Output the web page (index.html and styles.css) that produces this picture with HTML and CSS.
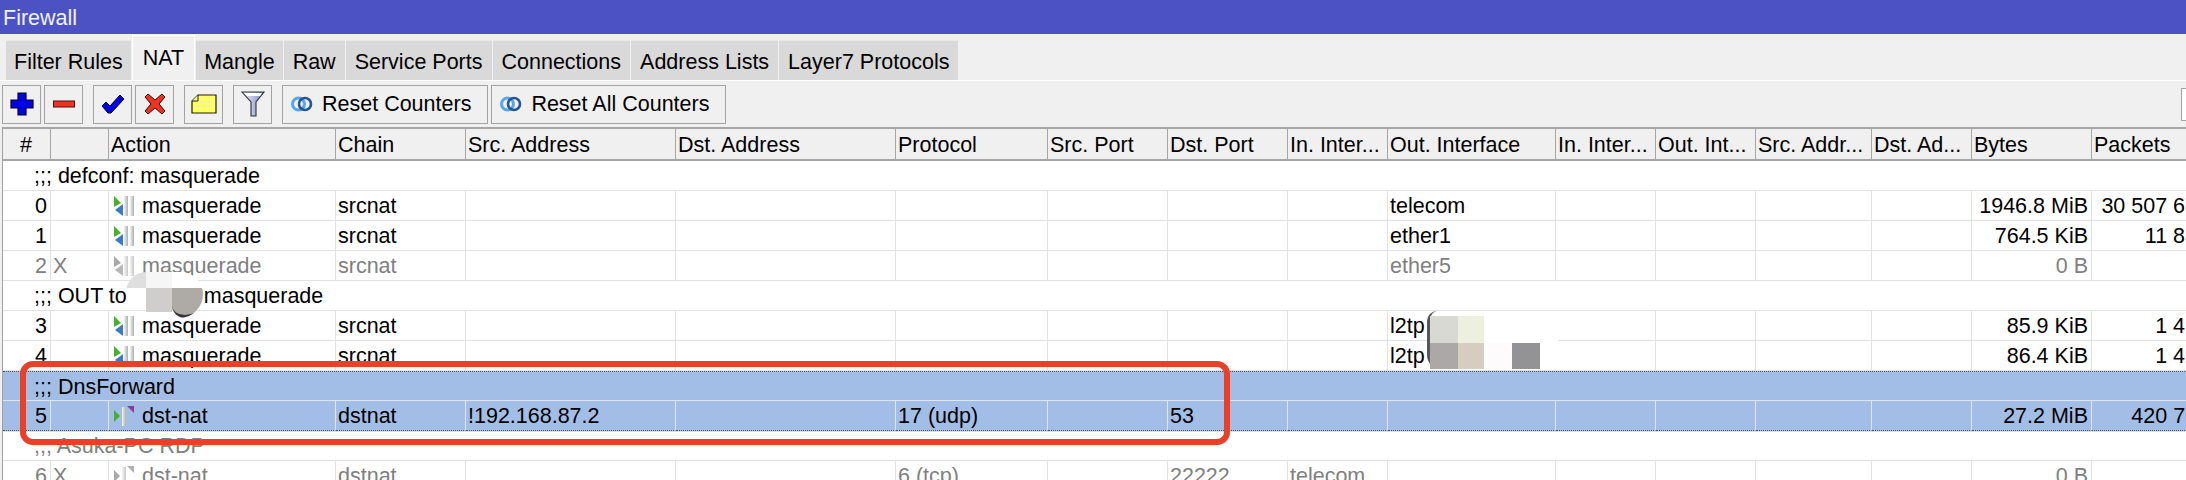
FILE: index.html
```html
<!DOCTYPE html>
<html lang="en">
<head>
    <meta charset="UTF-8">
    <title>Firewall</title>
    <link rel="stylesheet" href="styles.css">
</head>
<body>
    <svg class="defs" width="0" height="0">
        <defs>
            <linearGradient id="barGrad" x1="0" x2="1" y1="0" y2="0">
                <stop offset="0" stop-color="#f2f4f2"/>
                <stop offset="1" stop-color="#a9b1ad"/>
            </linearGradient>
            <linearGradient id="barOff" x1="0" x2="1" y1="0" y2="0">
                <stop offset="0" stop-color="#f4f4f4"/>
                <stop offset="1" stop-color="#c8c8c8"/>
            </linearGradient>
            <linearGradient id="funnelGrad" x1="0" x2="1" y1="0" y2="0">
                <stop offset="0" stop-color="#eef0f8"/>
                <stop offset="1" stop-color="#7f8cc0"/>
            </linearGradient>
            <symbol id="masq" viewBox="0 0 22 20">
                <path d="M1 0 L8 7 L1 11 Z" fill="#46b02e"/>
                <path d="M10 8 V20 L2 14 Z" fill="#3a7cc4"/>
                <rect x="11" y="0" width="4" height="20" fill="url(#barGrad)"/>
                <rect x="17" y="0" width="4" height="20" fill="url(#barGrad)"/>
            </symbol>
            <symbol id="masq-off" viewBox="0 0 22 20">
                <path d="M1 0 L8 7 L1 11 Z" fill="#a8a8a8"/>
                <path d="M10 8 V20 L2 14 Z" fill="#b8b8b8"/>
                <rect x="11" y="0" width="4" height="20" fill="url(#barOff)"/>
                <rect x="17" y="0" width="4" height="20" fill="url(#barOff)"/>
            </symbol>
            <symbol id="dnat" viewBox="0 0 22 20">
                <path d="M1 4 L7 10 L1 16 Z" fill="#46b02e"/>
                <rect x="9" y="1" width="4" height="19" fill="url(#barGrad)"/>
                <path d="M14 0 H21 V7 Z" fill="#8a3f94"/>
            </symbol>
            <symbol id="dnat-off" viewBox="0 0 22 20">
                <path d="M1 4 L7 10 L1 16 Z" fill="#a8a8a8"/>
                <rect x="9" y="1" width="4" height="19" fill="url(#barOff)"/>
                <path d="M14 0 H21 V7 Z" fill="#b0b0b0"/>
            </symbol>
            <symbol id="reset" viewBox="0 0 22 16">
                <circle cx="7.5" cy="8" r="6" fill="none" stroke="#58a6ea" stroke-width="3"/>
                <circle cx="14" cy="8" r="6" fill="none" stroke="#26568c" stroke-width="2.6"/>
            </symbol>
        </defs>
    </svg>

    <div class="titlebar">Firewall</div>

    <div class="tabs">
        <div class="tab tight">Filter Rules</div>
        <div class="tab active">NAT</div>
        <div class="tab tight">Mangle</div>
        <div class="tab">Raw</div>
        <div class="tab">Service Ports</div>
        <div class="tab">Connections</div>
        <div class="tab">Address Lists</div>
        <div class="tab">Layer7 Protocols</div>
    </div>

    <div class="toolbar">
        <button class="tool">
            <svg viewBox="0 0 24 24" width="24" height="24"><path d="M8 1 H16 V8 H23 V16 H16 V23 H8 V16 H1 V8 H8 Z" fill="#0000e6" stroke="#000020" stroke-width="1.2"/></svg>
        </button>
        <button class="tool">
            <svg viewBox="0 0 24 24" width="24" height="24"><rect x="1.5" y="9" width="21" height="6" fill="#ee3322" stroke="#501008" stroke-width="1"/></svg>
        </button>
        <button class="tool gap">
            <svg viewBox="0 0 24 24" width="24" height="24"><path d="M1 14 L5 10 L9 14 L19 3 L23 7 L10 21 H7 Z" fill="#0000e6" stroke="#000020" stroke-width="1"/></svg>
        </button>
        <button class="tool">
            <svg viewBox="0 0 24 24" width="24" height="24"><path d="M5 2 L12 8 L19 2 L22 5 L16 12 L22 19 L19 22 L12 16 L5 22 L2 19 L8 12 L2 5 Z" fill="#ee3322" stroke="#300804" stroke-width="1"/></svg>
        </button>
        <button class="tool gap">
            <svg viewBox="0 0 26 22" width="26" height="22"><path d="M7 2 H25 V20 H1 V8 Z" fill="#ffff66" stroke="#202000" stroke-width="1.2"/><path d="M7 2 V8 H1" fill="#fff9b0" stroke="#202000" stroke-width="1"/><path d="M9 9 H14 M16 9 H21 M5 13 H12 M14 13 H20" stroke="#e8e8d0" stroke-width="1.2"/></svg>
        </button>
        <button class="tool gap">
            <svg viewBox="0 0 24 26" width="24" height="26"><path d="M1 1 H23 L15 11 V25 H10 V11 Z" fill="url(#funnelGrad)" stroke="#303040" stroke-width="1.1"/><path d="M3 2 H21 L19 5 H6 Z" fill="#fff"/></svg>
        </button>
        <button class="tool wide gap">
            <svg width="22" height="16"><use href="#reset"/></svg>
            Reset Counters
        </button>
        <button class="tool wide">
            <svg width="22" height="16"><use href="#reset"/></svg>
            Reset All Counters
        </button>
        <input class="find" type="text">
    </div>

    <table class="rules">
        <colgroup>
            <col class="c-num"><col class="c-flag"><col class="c-action"><col class="c-chain">
            <col class="c-src"><col class="c-dst"><col class="c-proto"><col class="c-port"><col class="c-port">
            <col class="c-in"><col class="c-out"><col class="c-in"><col class="c-in">
            <col class="c-srcl"><col class="c-in"><col class="c-bytes"><col class="c-packets">
        </colgroup>
        <thead>
            <tr>
                <th class="center">#</th><th></th><th>Action</th><th>Chain</th><th>Src. Address</th><th>Dst. Address</th>
                <th>Protocol</th><th>Src. Port</th><th>Dst. Port</th><th>In. Inter...</th><th>Out. Interface</th><th>In. Inter...</th>
                <th>Out. Int...</th><th>Src. Addr...</th><th>Dst. Ad...</th><th>Bytes</th><th>Packets</th>
            </tr>
        </thead>
        <tbody>
            <tr><td class="comment" colspan="17">;;; defconf: masquerade</td></tr>
            <tr>
                <td class="num">0</td><td></td>
                <td><svg class="ico" width="22" height="20"><use href="#masq"/></svg>masquerade</td>
                <td>srcnat</td><td></td><td></td><td></td><td></td><td></td><td></td><td>telecom</td><td></td><td></td><td></td><td></td>
                <td class="num">1946.8 MiB</td><td class="num">30 507 678</td>
            </tr>
            <tr>
                <td class="num">1</td><td></td>
                <td><svg class="ico" width="22" height="20"><use href="#masq"/></svg>masquerade</td>
                <td>srcnat</td><td></td><td></td><td></td><td></td><td></td><td></td><td>ether1</td><td></td><td></td><td></td><td></td>
                <td class="num">764.5 KiB</td><td class="num">11 834</td>
            </tr>
            <tr class="off">
                <td class="num">2</td><td>X</td>
                <td><svg class="ico" width="22" height="20"><use href="#masq-off"/></svg>masquerade</td>
                <td>srcnat</td><td></td><td></td><td></td><td></td><td></td><td></td><td>ether5</td><td></td><td></td><td></td><td></td>
                <td class="num">0 B</td><td class="num"></td>
            </tr>
            <tr><td class="comment" colspan="17">;;; OUT to <span class="redacted"></span>masquerade</td></tr>
            <tr>
                <td class="num">3</td><td></td>
                <td><svg class="ico" width="22" height="20"><use href="#masq"/></svg>masquerade</td>
                <td>srcnat</td><td></td><td></td><td></td><td></td><td></td><td></td><td>l2tp</td><td></td><td></td><td></td><td></td>
                <td class="num">85.9 KiB</td><td class="num">1 412</td>
            </tr>
            <tr>
                <td class="num">4</td><td></td>
                <td><svg class="ico" width="22" height="20"><use href="#masq"/></svg>masquerade</td>
                <td>srcnat</td><td></td><td></td><td></td><td></td><td></td><td></td><td>l2tp</td><td></td><td></td><td></td><td></td>
                <td class="num">86.4 KiB</td><td class="num">1 426</td>
            </tr>
            <tr class="sel first"><td class="comment" colspan="17">;;; DnsForward</td></tr>
            <tr class="sel last">
                <td class="num">5</td><td></td>
                <td><svg class="ico" width="22" height="20"><use href="#dnat"/></svg>dst-nat</td>
                <td>dstnat</td><td>!192.168.87.2</td><td></td><td>17 (udp)</td><td></td><td>53</td><td></td><td></td><td></td><td></td><td></td><td></td>
                <td class="num">27.2 MiB</td><td class="num">420 718</td>
            </tr>
            <tr class="off"><td class="comment" colspan="17">;;; Asuka-PC RDP</td></tr>
            <tr class="off">
                <td class="num">6</td><td>X</td>
                <td><svg class="ico" width="22" height="20"><use href="#dnat-off"/></svg>dst-nat</td>
                <td>dstnat</td><td></td><td></td><td>6 (tcp)</td><td></td><td>22222</td><td>telecom</td><td></td><td></td><td></td><td></td><td></td>
                <td class="num">0 B</td><td class="num"></td>
            </tr>
        </tbody>
    </table>

    <!-- scribbled-out bits and the red marker on top of the screenshot -->
    <div class="smudge smudge-a">
        <i class="s1"></i><i class="s2"></i><i class="s0"></i>
        <i class="s0"></i><i class="s3"></i><i class="s4"></i>
    </div>
    <div class="smudge smudge-b">
        <i class="b1"></i><i class="b2"></i><i class="b0"></i><i class="b0"></i><i class="b0"></i>
        <i class="b3"></i><i class="b4"></i><i class="b5"></i><i class="b6"></i><i class="b0"></i>
    </div>
    <div class="marker"></div>
</body>
</html>
```

FILE: styles.css
```css
html, body { margin: 0; padding: 0; width: 2186px; height: 480px; overflow: hidden; background: #f0f0f0; }
body { position: relative; font-family: "Liberation Sans", Arial, sans-serif; font-size: 21.5px; color: #000; }
.defs { position: absolute; }

.titlebar { height: 34px; line-height: 36px; padding-left: 3px; background: #4c51c4; color: #f2f2fa; }

.tabs { display: flex; align-items: flex-end; gap: 1px; height: 46px; padding-left: 6px; border-bottom: 1px solid #fff; box-sizing: content-box; }
.tab { height: 39px; line-height: 43px; padding: 0 9px; background: #d9d9d9; border-top: 1px solid #e8e8e8; white-space: nowrap; }
.tab.tight { padding: 0 8px; }
.tab.active { height: 44px; line-height: 44px; padding: 0 10px; background: #f0f0f0; border: 1px solid #fff; border-bottom: none; }

.toolbar { display: flex; align-items: center; height: 46px; padding-left: 2px; box-sizing: border-box; gap: 3px; position: relative; }
.tool { display: flex; align-items: center; justify-content: center; gap: 9px; width: 39px; height: 39px; padding: 0; background: #f0f0f0; border: 1px solid #a3a3a3; font: inherit; color: #000; box-sizing: border-box; }
.tool.gap { margin-left: 7px; }
.tool.wide { width: auto; padding: 0 16px 0 8px; }
.find { margin-left: auto; width: 40px; height: 33px; margin-right: -35px; box-sizing: border-box; background: #fff; border: 1px solid #a3a3a3; padding: 0; }

.rules { table-layout: fixed; width: 2211px; margin-left: 2px; border-collapse: separate; border-spacing: 0; background: #fff; border-left: 1px solid #a0a0a0; }
.c-num { width: 48px; }
.c-flag { width: 58px; }
.c-action { width: 227px; }
.c-chain { width: 130px; }
.c-src { width: 210px; }
.c-dst { width: 220px; }
.c-proto { width: 152px; }
.c-port { width: 120px; }
.c-in { width: 100px; }
.c-out { width: 168px; }
.c-srcl { width: 116px; }
.c-bytes { width: 120px; }
.c-packets { width: 121px; }

.rules th { height: 28px; padding: 2px 3px 0 2px; background: #f0f0f0; font-weight: normal; text-align: left; white-space: nowrap; overflow: hidden; border-top: 2px solid #a6a6a6; border-bottom: 2px solid #a6a6a6; border-right: 1px solid #a6a6a6; }
.rules th.center { text-align: center; }
.rules td { height: 27px; padding: 2px 3px 0 2px; white-space: nowrap; overflow: hidden; border-bottom: 1px solid #e2e2e2; border-right: 1px solid #e2e2e2; }
.rules td.num { text-align: right; }
.rules td.comment { padding-left: 31px; border-right: none; }
.ico { vertical-align: -3px; margin: 0 7px 0 2px; }
.redacted { display: inline-block; width: 71px; }

.off td { color: #808080; }
.sel td { background: #a3bee6; border-color: #dde6f3; }
.first td { border-top: 1px dotted #555; height: 26px; }
.last td { border-bottom: 1px dotted #555; box-shadow: 0 1px 0 #e4dcdc; }

.smudge { position: absolute; display: grid; }
.smudge-a { left: 126px; top: 272px; width: 77px; height: 46px; grid-template-columns: 20px 26px 31px; grid-template-rows: 16px 30px; border-radius: 22px 24px 26px 10px; overflow: hidden; }
.smudge-a .s0 { background: #fff; }
.smudge-a .s1 { background: #dfdfdf; }
.smudge-a .s2 { background: #f6f6f6; }
.smudge-a .s3 { background: #d0cdcd; height: 24px; }
.smudge-a .s4 { background: #aeaba6; border-bottom: 3px solid #333; border-radius: 0 0 26px 18px; }
.smudge-a i:nth-child(4) { background: transparent; }

.smudge-b { left: 1430px; top: 311px; width: 128px; height: 58px; grid-template-columns: 28px 26px 28px 28px 18px; grid-template-rows: 32px 26px; border-left: 3px solid #55565a; border-radius: 10px 0 0 14px; margin-left: -3px; }
.smudge-b i { display: block; }
.smudge-b .b0 { background: #fff; }
.smudge-b .b1 { background: #d9d9d3; margin-top: 5px; }
.smudge-b .b2 { background: #eef0df; margin-top: 5px; }
.smudge-b .b3 { background: #aca8a7; }
.smudge-b .b4 { background: #d6cdc0; }
.smudge-b .b5 { background: #fdfbfb; }
.smudge-b .b6 { background: #939396; }

.marker { position: absolute; left: 20px; top: 361px; width: 1210px; height: 84px; box-sizing: border-box; border: 6px solid #ea4027; border-radius: 13px; }
```
